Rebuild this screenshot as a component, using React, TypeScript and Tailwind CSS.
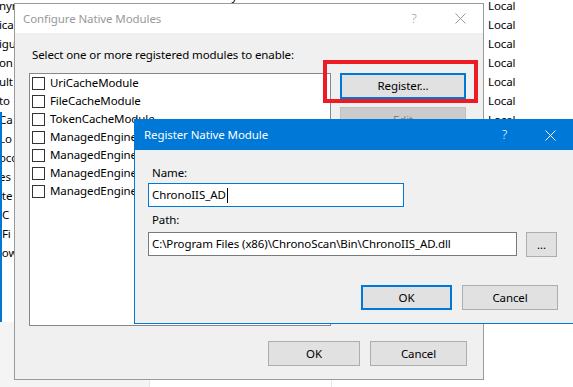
import type { ReactNode } from "react"

const font = { fontFamily: '"Noto Sans", "Open Sans", sans-serif' }

const leftBits = ["nyr", "ica", "igu", "on", "ult", "to", "Ca", "Lo", "occ", "es", "ite", ":C", ":Fi", "low"]
const modules = [
  "UriCacheModule",
  "FileCacheModule",
  "TokenCacheModule",
  "ManagedEngineV4.0_32bit",
  "ManagedEngineV4.0_64bit",
  "ManagedEngine",
  "ManagedEngine64",
]

function CloseGlyph({ color }: { color: string }) {
  return (
    <svg width="11" height="11" viewBox="0 0 11 11">
      <path d="M0.5 0.5 L10.5 10.5 M10.5 0.5 L0.5 10.5" stroke={color} strokeWidth="1" fill="none" />
    </svg>
  )
}

function Button({
  children,
  className,
  focused,
  disabled,
}: {
  children: ReactNode
  className: string
  focused?: boolean
  disabled?: boolean
}) {
  const border = focused
    ? "border-2 border-[#0078d7] bg-[#e1e1e1] text-black"
    : disabled
      ? "border border-[#bfbfbf] bg-[#cccccc] text-[#838383]"
      : "border border-[#adadad] bg-[#e1e1e1] text-black"
  return (
    <div className={`flex items-center justify-center text-[11.5px] leading-4 tracking-[-0.1px] ${border} ${className}`}>
      {children}
    </div>
  )
}

export default function App() {
  return (
    <div
      className="relative h-[387px] w-[573px] overflow-hidden bg-white text-[11.5px] tracking-[-0.1px] text-black"
      style={font}
    >
      {/* background listing window */}
      <div className="absolute left-0 top-[-4px] w-[14px] overflow-hidden">
        {leftBits.map((b, i) => (
          <div key={i} className="ml-[-1px] flex h-[19px] items-center whitespace-nowrap leading-4">
            {b}
          </div>
        ))}
      </div>
      <div className="absolute left-[488px] top-[-4px] flex flex-col">
        {Array.from({ length: 8 }).map((_, i) => (
          <div key={i} className="flex h-[19px] items-center leading-4">
            Local
          </div>
        ))}
      </div>
      <div className="absolute left-[40px] top-[-12px] whitespace-nowrap leading-4">
        Authentication Mode&nbsp;&nbsp;&nbsp;&nbsp;&nbsp;&nbsp;%windir%\System32\inetsrv\authanon.dll&nbsp;&nbsp;&nbsp;&nbsp;&nbsp;&nbsp;Native
      </div>
      <div className="absolute left-0 top-[112px] h-[210px] w-[2px] bg-[#0078d7]" />
      <div className="absolute left-0 top-[322px] h-[65px] w-[150px] border-r border-[#dfe6ee] bg-[#f4f4f4]" />
      <div className="absolute left-[331px] top-[378px] h-[9px] w-px bg-[#dfe6ee]" />

      {/* Configure Native Modules */}
      <div className="absolute left-[14px] top-[3px] flex h-[377px] w-[470px] flex-col border border-[#9a9a9a] bg-[#f0f0f0]">
        <div className="flex h-[29px] shrink-0 items-center bg-white pl-[8px] text-[#999999]">
          <span className="flex-1">Configure Native Modules</span>
          <span className="w-[46px] text-center text-[13px] font-light">?</span>
          <span className="flex w-[46px] justify-center">
            <CloseGlyph color="#9a9a9a" />
          </span>
        </div>
        <div className="flex flex-1 flex-col px-[14px]">
          <div className="mt-[14px] ml-[3px] leading-4">Select one or more registered modules to enable:</div>
          <div className="mt-[10px] flex gap-[9px]">
            <div className="h-[253px] w-[302px] overflow-hidden border border-[#828790] bg-white">
              {modules.map((m) => (
                <div key={m} className="flex h-[18px] items-center whitespace-nowrap pl-[2px]">
                  <span className="mr-[5px] h-[13px] w-[13px] shrink-0 border border-[#333333] bg-white" />
                  {m}
                </div>
              ))}
            </div>
            <div className="flex flex-col gap-[8px]">
              <Button focused className="h-[26px] w-[126px]">
                Register...
              </Button>
              <Button disabled className="h-[26px] w-[126px]">
                Edit
              </Button>
            </div>
          </div>
          <div className="mt-[15px] flex justify-end gap-[10px] pr-[2px]">
            <Button className="h-[25px] w-[92px]">OK</Button>
            <Button className="h-[25px] w-[97px]">Cancel</Button>
          </div>
        </div>
      </div>

      {/* highlight */}
      <div className="absolute left-[323px] top-[60px] h-[43px] w-[155px] border-4 border-[#ed1c24]" />

      {/* Register Native Module */}
      <div className="absolute left-[134px] top-[119px] flex h-[205px] w-[440px] flex-col border border-[#0078d7] bg-[#f0f0f0]">
        <div className="flex h-[30px] shrink-0 items-center bg-[#0078d7] pl-[9px] text-white">
          <span className="flex-1">Register Native Module</span>
          <span className="w-[45px] text-center text-[13px] font-light">?</span>
          <span className="flex w-[46px] justify-center">
            <CloseGlyph color="#ffffff" />
          </span>
        </div>
        <div className="flex flex-col pl-[13px] pr-[15px]">
          <div className="mt-[15px] ml-[4px] leading-4">Name:</div>
          <div className="mt-[2px] flex h-[24px] w-[256px] items-center border border-[#0078d7] bg-white pl-[3px]">
            ChronoIIS_AD
            <span className="ml-px h-[15px] w-px bg-black" />
          </div>
          <div className="mt-[5px] ml-[4px] leading-4">Path:</div>
          <div className="mt-[4px] flex items-start gap-[9px]">
            <div className="flex h-[24px] w-[369px] items-center whitespace-nowrap border border-[#7a7a7a] bg-white pl-[3px]">
              C:\Program Files (x86)\ChronoScan\Bin\ChronoIIS_AD.dll
            </div>
            <Button className="h-[25px] w-[31px]">...</Button>
          </div>
          <div className="mt-[28px] flex justify-end gap-[10px]">
            <Button focused className="h-[25px] w-[91px]">
              OK
            </Button>
            <Button className="h-[25px] w-[96px]">Cancel</Button>
          </div>
        </div>
      </div>
    </div>
  )
}
